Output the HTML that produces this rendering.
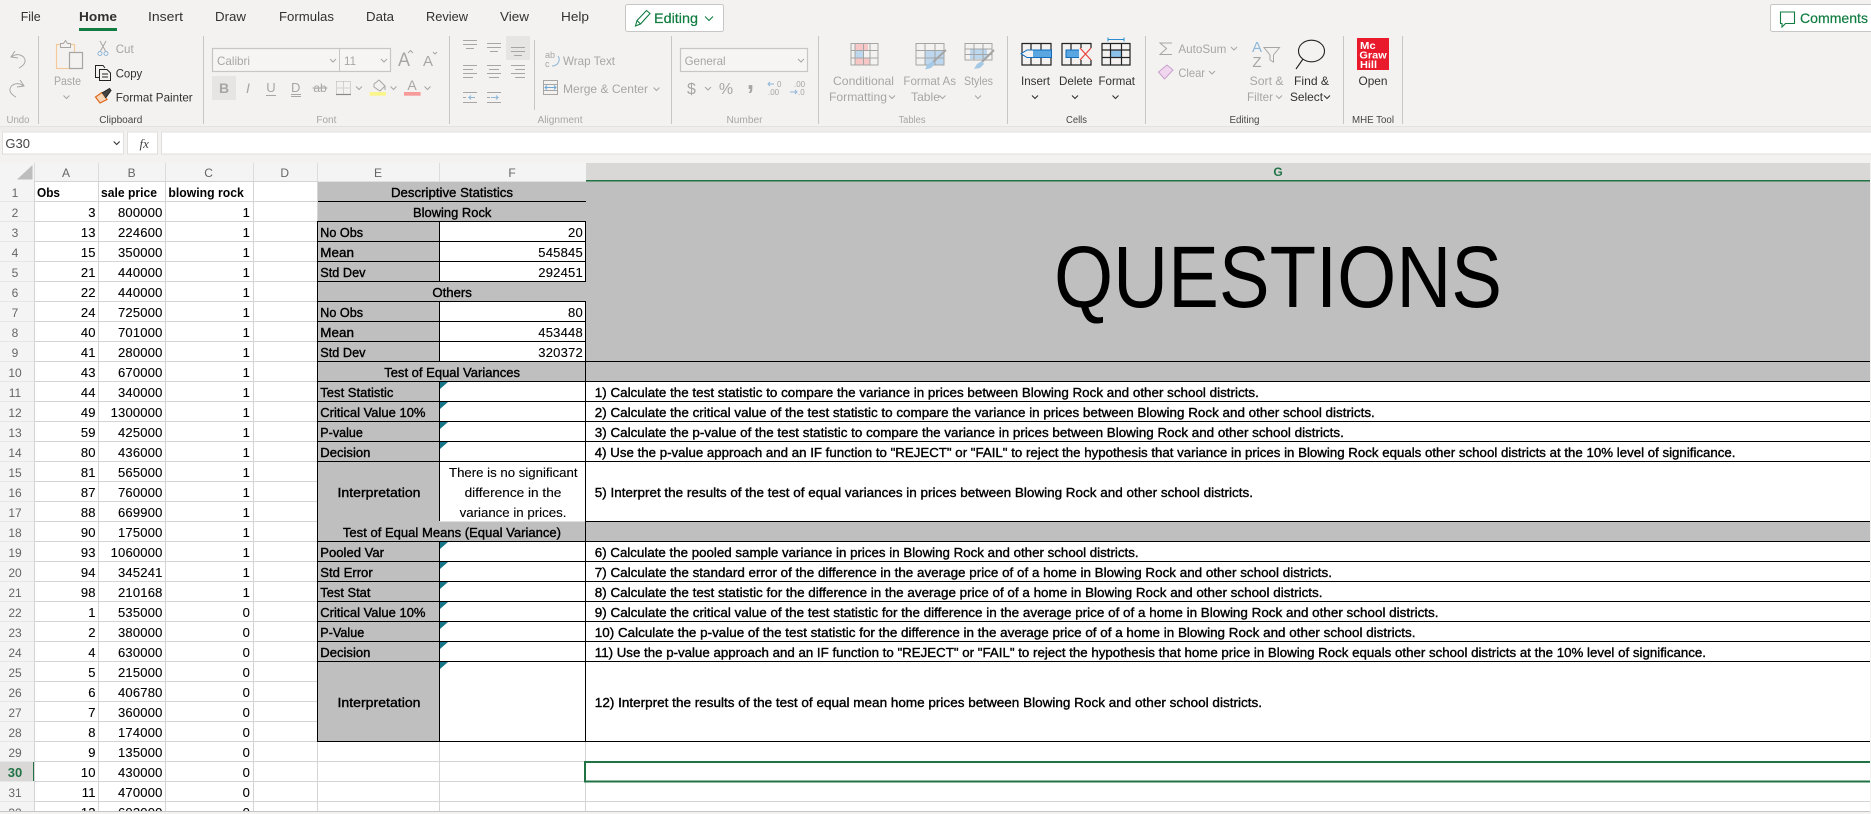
<!DOCTYPE html>
<html><head><meta charset="utf-8"><title>Excel</title>
<style>
html,body{margin:0;padding:0;background:#f3f2f1;overflow:hidden}
svg{display:block}
text{font-family:"Liberation Sans",sans-serif;white-space:pre}
.s{font-size:13px;fill:#000}
.b{font-weight:bold}
.m{stroke:#000;stroke-width:.38}
.p{stroke:#000;stroke-width:.12}
.n{letter-spacing:.2px;text-anchor:end;stroke:#000;stroke-width:.12}
.h{font-size:12px;fill:#666;text-anchor:middle}
.t{font-size:13.3px;fill:#323130}
.r{font-size:12px;fill:#323130}
.d{font-size:12px;fill:#a8a6a4}
.g{font-size:10px;fill:#a8a6a4;text-anchor:middle}
.gd{font-size:10px;fill:#484644;text-anchor:middle}
.ic{fill:none;stroke:#a8a6a4;stroke-width:1}
.ik{fill:none;stroke:#222;stroke-width:1.2}
</style></head><body>
<svg xmlns="http://www.w3.org/2000/svg" width="1871" height="814" viewBox="0 0 1871 814">
<defs>
<path id="c" d="M-3 -1.5L0 1.5L3 -1.5" fill="none" stroke="#a8a6a4" stroke-width="1"/>
<path id="k" d="M-3 -1.5L0 1.5L3 -1.5" fill="none" stroke="#323130" stroke-width="1.1"/>
</defs>
<rect width="1871" height="814" fill="#f3f2f1"/>

<!-- Tabs -->
<text class="t" x="20.7" y="21" textLength="20" lengthAdjust="spacingAndGlyphs">File</text>
<text class="t b" x="79" y="21" textLength="38" lengthAdjust="spacingAndGlyphs">Home</text>
<rect x="79" y="28" width="38" height="3" fill="#107c41"/>
<text class="t" x="148" y="21" textLength="35" lengthAdjust="spacingAndGlyphs">Insert</text>
<text class="t" x="215" y="21" textLength="31" lengthAdjust="spacingAndGlyphs">Draw</text>
<text class="t" x="279" y="21" textLength="55" lengthAdjust="spacingAndGlyphs">Formulas</text>
<text class="t" x="366" y="21" textLength="28" lengthAdjust="spacingAndGlyphs">Data</text>
<text class="t" x="426" y="21" textLength="42" lengthAdjust="spacingAndGlyphs">Review</text>
<text class="t" x="500" y="21" textLength="29" lengthAdjust="spacingAndGlyphs">View</text>
<text class="t" x="561" y="21" textLength="28" lengthAdjust="spacingAndGlyphs">Help</text>

<rect x="625.5" y="4.5" width="98" height="27" rx="2" fill="#fff" stroke="#c8c6c4"/>
<path d="M635.5 26L637 20.5L646.5 10.5L650 13.5L640.5 24ZM637 20.5L640.5 24" fill="none" stroke="#107c41" stroke-width="1.1"/>
<text x="654" y="23" font-size="14" fill="#107c41" stroke="#107c41" stroke-width=".2" textLength="44" lengthAdjust="spacingAndGlyphs">Editing</text>
<path d="M705 16.5L709 20.5L713 16.5" fill="none" stroke="#107c41" stroke-width="1.1"/>

<rect x="1770.5" y="4.5" width="105" height="27" rx="2" fill="#fff" stroke="#c8c6c4"/>
<path d="M1780.5 12H1794.5V23.5H1785.5L1782 27V23.5H1780.5Z" fill="none" stroke="#107c41" stroke-width="1.1"/>
<text x="1800" y="23" font-size="14" fill="#107c41" stroke="#107c41" stroke-width=".2" textLength="68" lengthAdjust="spacingAndGlyphs">Comments</text>

<!-- Group separators -->
<path d="M38.5 36V124M203.5 36V124M449.5 36V124M534.5 40V110M671.5 36V124M818.5 36V124M1007.5 36V124M1145.5 36V124M1343.5 36V124M1402.5 36V124" stroke="#c8c6c4" fill="none"/>

<!-- Undo / redo -->
<path class="ic" d="M15 51L11 57L18 58M11.5 57C18 52 26 56 25 62C24 65 21 67 19 68"/>
<path class="ic" d="M20 80L24 86L17 87M23.5 86C17 81 9 85 10 91C11 94 14 96 16 97"/>

<!-- Paste -->
<rect x="56.5" y="44.5" width="18" height="24" fill="none" stroke="#f6c99a" stroke-width="1.2"/>
<path d="M60.5 47.5V43.5H63.5L65.5 40.5L67.5 43.5H70.5V47.5Z" fill="#f3f2f1" stroke="#a8a6a4"/>
<rect x="69.5" y="52.5" width="13" height="16" fill="#f3f2f1" stroke="#a5a5a5" stroke-width="1.2"/>
<text class="d" x="54" y="85" textLength="27" lengthAdjust="spacingAndGlyphs">Paste</text>
<use href="#c" x="66.5" y="97"/>

<!-- Clipboard -->
<path d="M100 41L105.5 51M106 41L100.5 51" fill="none" stroke="#a8a6a4"/>
<circle cx="100" cy="53.5" r="2" fill="none" stroke="#8fb7d8"/><circle cx="106" cy="53.5" r="2" fill="none" stroke="#8fb7d8"/>
<text class="d" x="115.7" y="53" textLength="18" lengthAdjust="spacingAndGlyphs">Cut</text>
<path d="M99 77.5H95.5V65.5H103L105 68" fill="none" stroke="#222"/>
<path d="M99.5 69.5H107L110.5 73V80.5H99.5ZM102 74H108M102 77H108" fill="#f3f2f1" stroke="#222"/>
<text class="r" x="115.7" y="77.5" textLength="26.5" lengthAdjust="spacingAndGlyphs">Copy</text>
<path d="M95.5 97L102 92.5L107 99.5L100 103Z" fill="#f8d8b8" stroke="#e0691d" stroke-width="1.2"/>
<path d="M102 93L109.5 88.5L111 90.5L105.5 98" fill="#444" stroke="#222"/>
<text class="r" x="115.7" y="101.5" textLength="77" lengthAdjust="spacingAndGlyphs">Format Painter</text>

<text class="g" x="18" y="123" textLength="23" lengthAdjust="spacingAndGlyphs">Undo</text>
<text class="gd" x="120.8" y="123" textLength="43" lengthAdjust="spacingAndGlyphs">Clipboard</text>
<text class="g" x="326.4" y="123" textLength="20" lengthAdjust="spacingAndGlyphs">Font</text>
<text class="g" x="560" y="123" textLength="45" lengthAdjust="spacingAndGlyphs">Alignment</text>
<text class="g" x="744.5" y="123" textLength="36" lengthAdjust="spacingAndGlyphs">Number</text>
<text class="g" x="912" y="123" textLength="27" lengthAdjust="spacingAndGlyphs">Tables</text>
<text class="gd" x="1076.5" y="123" textLength="21" lengthAdjust="spacingAndGlyphs">Cells</text>
<text class="gd" x="1244.5" y="123" textLength="30" lengthAdjust="spacingAndGlyphs">Editing</text>
<text class="gd" x="1373" y="123" textLength="42" lengthAdjust="spacingAndGlyphs">MHE Tool</text>

<!-- Font -->
<rect x="212.5" y="48.5" width="178" height="23" fill="#f6f5f4" stroke="#c8c6c4" stroke-width="1.2"/>
<path d="M339.5 48.5V71.5" stroke="#c8c6c4"/>
<text class="d" x="217" y="65" textLength="33" lengthAdjust="spacingAndGlyphs">Calibri</text>
<text class="d" x="344" y="65" textLength="12" lengthAdjust="spacingAndGlyphs">11</text>
<use href="#c" x="333" y="60.5"/><use href="#c" x="384" y="60.5"/>
<text x="398" y="66" font-size="19" fill="#a8a6a4" textLength="12" lengthAdjust="spacingAndGlyphs">A</text>
<path class="ic" d="M408 53L410.5 50.5L413 53"/>
<text x="423" y="66" font-size="15" fill="#a8a6a4" textLength="10" lengthAdjust="spacingAndGlyphs">A</text>
<path class="ic" d="M433 52L435 54L437 52"/>
<rect x="212" y="76" width="24" height="24" fill="#e6e5e4"/>
<text x="224" y="93" font-size="14" font-weight="bold" fill="#a8a6a4" text-anchor="middle">B</text>
<text x="248" y="93" font-size="14" font-style="italic" fill="#a8a6a4" text-anchor="middle">I</text>
<text x="271" y="92" font-size="13" fill="#a8a6a4" text-anchor="middle">U</text>
<path d="M266 95.5H276" stroke="#a8a6a4"/>
<text x="295.7" y="92" font-size="13" fill="#a8a6a4" text-anchor="middle">D</text>
<path d="M291 94.5H301M291 96.5H301" stroke="#a8a6a4"/>
<text x="320" y="92" font-size="12" fill="#a8a6a4" text-anchor="middle">ab</text>
<path d="M312.5 88H327.5" stroke="#a8a6a4"/>
<path d="M336.5 81.5H350.5V94.5M336.5 81.5V94.5M343.5 81.5V94.5M336.5 88H350.5" fill="none" stroke="#b5b3b1" stroke-dasharray="1 1"/>
<path d="M336 94.5H351" stroke="#8a8886" stroke-width="1.2"/>
<use href="#c" x="359" y="88"/>
<path class="ic" d="M374 84L379 80L385 86L380 91L374 87ZM385 86V90"/>
<rect x="369.6" y="92" width="16.4" height="3.7" fill="#fbf68c"/>
<use href="#c" x="393.5" y="88"/>
<text x="412" y="90" font-size="14" fill="#a8a6a4" text-anchor="middle">A</text>
<rect x="404" y="92" width="16.6" height="3.7" fill="#f79a9a"/>
<use href="#c" x="427.5" y="88"/>

<!-- Alignment -->
<rect x="506" y="36" width="24" height="24" fill="#e6e5e4"/>
<path class="ic" d="M463 40.5H477M463 44.5H477M466 48.5H474M487 43.5H501M487 47.5H501M490 51.5H498M511 47.5H525M511 51.5H525M514 55.5H522"/>
<path class="ic" d="M463 65.5H477M463 69.5H473M463 73.5H477M463 77.5H473M487 65.5H501M489 69.5H499M487 73.5H501M489 77.5H499M511 65.5H525M515 69.5H525M511 73.5H525M515 77.5H525"/>
<path class="ic" d="M463 92.5H477M463 97.5H466M463 102.5H477M487 92.5H501M487 97.5H490M487 102.5H501"/>
<path d="M475 97.5H469L471 95.5M469 97.5L471 99.5M491 97.5H498L496 95.5M498 97.5L496 99.5" fill="none" stroke="#8fb7d8"/>
<text x="545" y="58" font-size="9" fill="#a8a6a4">ab</text>
<text x="545" y="67" font-size="9" fill="#a8a6a4">c</text>
<path d="M558 56C561 60 558 66 552 66" fill="none" stroke="#8fb7d8"/>
<text class="d" x="563" y="65" textLength="52" lengthAdjust="spacingAndGlyphs">Wrap Text</text>
<rect x="543.5" y="80.5" width="14" height="14" fill="none" stroke="#a8a6a4"/>
<path d="M543.5 84.5H557.5M543.5 90.5H557.5" stroke="#a8a6a4"/>
<path d="M545 87.5H556M547 85.5L545 87.5L547 89.5M554 85.5L556 87.5L554 89.5" fill="none" stroke="#6ea8d8"/>
<text class="d" x="563" y="93" textLength="85" lengthAdjust="spacingAndGlyphs">Merge &amp; Center</text>
<use href="#c" x="656.5" y="89"/>

<!-- Number -->
<rect x="680.5" y="48.5" width="127" height="23" fill="#f6f5f4" stroke="#c8c6c4" stroke-width="1.2"/>
<text class="d" x="684.6" y="65" textLength="41" lengthAdjust="spacingAndGlyphs">General</text>
<use href="#c" x="801" y="60.5"/>
<text x="691.5" y="94" font-size="16" fill="#a8a6a4" text-anchor="middle">$</text>
<use href="#c" x="708" y="88.5"/>
<text x="726" y="94" font-size="16" fill="#a8a6a4" text-anchor="middle">%</text>
<text x="750.5" y="89" font-size="26" font-weight="bold" fill="#a8a6a4" text-anchor="middle">,</text>
<text x="777" y="87" font-size="8" fill="#a8a6a4">0</text>
<path d="M774 84H768M770 82L768 84L770 86" fill="none" stroke="#8fb7d8"/>
<text x="768" y="95" font-size="8" fill="#a8a6a4">.00</text>
<text x="794" y="87" font-size="8" fill="#a8a6a4">.00</text>
<path d="M790 92H797M795 90L797 92L795 94" fill="none" stroke="#8fb7d8"/>
<text x="798" y="95" font-size="8" fill="#a8a6a4">.0</text>

<!-- Tables -->
<rect x="855" y="43" width="13" height="7.5" fill="#f7c6c6"/><rect x="855" y="50.5" width="8.5" height="7.5" fill="#bcd7ee"/><rect x="855" y="58" width="15" height="7" fill="#f7c6c6"/>
<path d="M851 43.5H878V65H851ZM851 50.5H878M851 58H878M855 43.5V65M863.5 43.5V65M870 43.5V65" fill="none" stroke="#a5a5a5"/>
<text class="d" x="833" y="85" textLength="61" lengthAdjust="spacingAndGlyphs">Conditional</text>
<text class="d" x="829" y="101" textLength="58" lengthAdjust="spacingAndGlyphs">Formatting</text><use href="#c" x="892" y="97"/>
<rect x="925" y="50" width="19" height="15" fill="#bcd7ee"/>
<path d="M916 43.5H944V65H916ZM916 50.5H944M916 58H944M925 43.5V65M935 43.5V65" fill="none" stroke="#a5a5a5"/>
<path d="M946 50L933 62" stroke="#a5a5a5" stroke-width="2"/><path d="M933 61L927 65L925 69.5L931 68L935 64Z" fill="#a5c8e4"/>
<text class="d" x="903.4" y="85" textLength="52.6" lengthAdjust="spacingAndGlyphs">Format As</text>
<text class="d" x="911" y="101" textLength="29" lengthAdjust="spacingAndGlyphs">Table</text><use href="#c" x="942.5" y="97"/>
<rect x="970" y="49" width="17" height="10" fill="#bcd7ee"/>
<path d="M965 43.5H992V60H965ZM965 49H992M965 54.5H992M974 43.5V60M983 43.5V60" fill="none" stroke="#a5a5a5"/>
<path d="M994 50L982 62" stroke="#a5a5a5" stroke-width="2"/><path d="M982 61L977 64L974 69L980 68L984 64Z" fill="#a5c8e4"/>
<text class="d" x="964" y="85" textLength="29" lengthAdjust="spacingAndGlyphs">Styles</text><use href="#c" x="978" y="97"/>

<!-- Cells -->
<path class="ik" d="M1022 43.5H1051V65H1022ZM1031 43.5V65M1041 43.5V65"/>
<rect x="1029" y="50" width="22.5" height="7.5" fill="#5aa6e0" stroke="#0f6cbd"/>
<path d="M1033 50L1027 50L1021 53.7L1027 57.5H1033" fill="#f3f2f1" stroke="#0f6cbd"/>
<text class="r" x="1021" y="85" textLength="29" lengthAdjust="spacingAndGlyphs">Insert</text><use href="#k" x="1035" y="97"/>
<path class="ik" d="M1062 43.5H1091V65H1062ZM1071 43.5V65M1081 43.5V65"/>
<rect x="1066" y="50" width="14" height="7.5" fill="#5aa6e0" stroke="#0f6cbd"/>
<rect x="1079" y="48" width="14" height="12" fill="#f3f2f1"/>
<path d="M1080 48L1091 60M1091 48L1080 60" stroke="#e8403a" stroke-width="1.2"/>
<text class="r" x="1059" y="85" textLength="33.6" lengthAdjust="spacingAndGlyphs">Delete</text><use href="#k" x="1075" y="97"/>
<rect x="1110" y="50" width="11.5" height="7.5" fill="#8cc2ea"/>
<path class="ik" d="M1102 43.5H1130V65H1102ZM1110.5 43.5V65M1121.5 43.5V65M1102 50H1130M1102 57.5H1130"/>
<path d="M1108 39.5H1124M1108 37.5V41.5M1124 37.5V41.5" stroke="#2b8ccf" fill="none"/>
<text class="r" x="1098.5" y="85" textLength="36.5" lengthAdjust="spacingAndGlyphs">Format</text><use href="#k" x="1115.5" y="97"/>

<!-- Editing -->
<path class="ic" d="M1172 43H1160L1166.5 48.5L1160 54.5H1172" stroke-width="1.1"/>
<text class="d" x="1178.4" y="53" textLength="48" lengthAdjust="spacingAndGlyphs">AutoSum</text><use href="#c" x="1234" y="48.5"/>
<path d="M1158.5 72L1167 65L1173 70L1164.5 79Z" fill="#f0d7ef" stroke="#c8a2cc"/>
<text class="d" x="1178.4" y="77" textLength="26.6" lengthAdjust="spacingAndGlyphs">Clear</text><use href="#c" x="1212" y="72.5"/>
<text x="1257" y="52" font-size="15" fill="#8fb7d8" text-anchor="middle">A</text>
<text x="1257" y="67" font-size="15" fill="#a8a6a4" text-anchor="middle">Z</text>
<path class="ic" d="M1264 47.5H1279.5L1273.5 55V62L1270 60V55Z"/>
<text class="d" x="1249.6" y="85" textLength="34" lengthAdjust="spacingAndGlyphs">Sort &amp;</text>
<text class="d" x="1247" y="101" textLength="26" lengthAdjust="spacingAndGlyphs">Filter</text><use href="#c" x="1279" y="97"/>
<ellipse cx="1311.5" cy="51" rx="13" ry="10.8" fill="none" stroke="#222" stroke-width="1.1"/>
<path d="M1303 59L1296 69" stroke="#222" stroke-width="1.1"/>
<text class="r" x="1294" y="85" textLength="35" lengthAdjust="spacingAndGlyphs">Find &amp;</text>
<text class="r" x="1290" y="101" textLength="33" lengthAdjust="spacingAndGlyphs">Select</text><use href="#k" x="1327" y="97"/>

<!-- MHE -->
<rect x="1357" y="38" width="32" height="32" fill="#e81a2b"/>
<g font-size="10.5" font-weight="bold" fill="#fff">
<text x="1360" y="49" textLength="15.7" lengthAdjust="spacingAndGlyphs">Mc</text>
<text x="1359.4" y="58.5" textLength="27.3" lengthAdjust="spacingAndGlyphs">Graw</text>
<text x="1360" y="68" textLength="17" lengthAdjust="spacingAndGlyphs">Hill</text>
</g>
<text class="r" x="1358.5" y="85" textLength="29" lengthAdjust="spacingAndGlyphs">Open</text>

<!-- Ribbon shadow + formula bar -->
<rect x="0" y="126" width="1871" height="1" fill="#e3e2e1"/>
<rect x="0" y="127" width="1871" height="4" fill="#eeedec"/>
<rect x="2.5" y="132" width="121" height="22" fill="#fff" stroke="#e1dfdd"/>
<text x="5.4" y="148" font-size="13" fill="#444" textLength="24.6" lengthAdjust="spacingAndGlyphs">G30</text>
<use href="#k" x="116.7" y="143"/>
<rect x="127.5" y="132" width="30" height="22" fill="#fff" stroke="#e1dfdd"/>
<text x="139.5" y="148" font-size="13" font-style="italic" fill="#444" style="font-family:'Liberation Serif',serif">fx</text>
<rect x="161.5" y="132" width="1712" height="22" fill="#fff" stroke="#e1dfdd"/>

<!-- Sheet background -->
<rect x="0" y="163" width="1871" height="18" fill="#f4f4f4"/>
<rect x="0" y="181" width="34" height="633" fill="#f4f4f4"/>
<rect x="34" y="181" width="1837" height="633" fill="#fff"/>
<rect x="586" y="163" width="1284" height="17" fill="#d9d8d6"/>
<rect x="586" y="180" width="1284" height="2" fill="#217346"/>
<path d="M17 179.5L32.5 165V179.5Z" fill="#bdbdbd"/>
<path d="M34.5 163V181M98.5 163V181M165.5 163V181M253.5 163V181M317.5 163V181M439.5 163V181" stroke="#dcdcdc"/>
<rect x="0" y="761.5" width="33" height="20" fill="#d9d8d6"/>
<rect x="33" y="761" width="1.5" height="21" fill="#217346"/>

<!-- Gridlines -->
<path fill="none" stroke="#d4d4d4" d="M34.5 181V812M98.5 181V812M165.5 181V812M253.5 181V812M317.5 181V812M439.5 741V812M585.5 741V812
M34 181.5H318M34 201.5H318M34 221.5H318M34 241.5H318M34 261.5H318M34 281.5H318M34 301.5H318M34 321.5H318M34 341.5H318M34 361.5H318M34 381.5H318M34 401.5H318M34 421.5H318M34 441.5H318M34 461.5H318M34 481.5H318M34 501.5H318M34 521.5H318M34 541.5H318M34 561.5H318M34 581.5H318M34 601.5H318M34 621.5H318M34 641.5H318M34 661.5H318M34 681.5H318M34 701.5H318M34 721.5H318M34 741.5H318M34 761.5H1870M34 781.5H1870M34 801.5H1870"/>
<path fill="none" stroke="#e6e6e6" d="M0 201.5H34M0 221.5H34M0 241.5H34M0 261.5H34M0 281.5H34M0 301.5H34M0 321.5H34M0 341.5H34M0 361.5H34M0 381.5H34M0 401.5H34M0 421.5H34M0 441.5H34M0 461.5H34M0 481.5H34M0 501.5H34M0 521.5H34M0 541.5H34M0 561.5H34M0 581.5H34M0 601.5H34M0 621.5H34M0 641.5H34M0 661.5H34M0 681.5H34M0 701.5H34M0 721.5H34M0 741.5H34M0 761.5H34M0 781.5H34M0 801.5H34"/>

<!-- Gray fills -->
<rect x="318" y="181.5" width="1552" height="180" fill="#bfbfbf"/>
<rect x="440" y="221.5" width="145.5" height="60" fill="#fff"/>
<rect x="440" y="301.5" width="145.5" height="60" fill="#fff"/>
<rect x="318" y="361.5" width="1552" height="20" fill="#bfbfbf"/>
<rect x="318" y="381.5" width="121.5" height="140" fill="#bfbfbf"/>
<rect x="440" y="381.5" width="146" height="140" fill="#fff"/>
<rect x="586" y="381.5" width="1284" height="140" fill="#fff"/>
<rect x="318" y="521.5" width="1552" height="20" fill="#bfbfbf"/>
<rect x="318" y="541.5" width="121.5" height="200" fill="#bfbfbf"/>
<rect x="440" y="541.5" width="1430" height="200" fill="#fff"/>

<!-- Black borders -->
<path fill="none" stroke="#000" d="M318 201.5H586M318 221.5H586M318 241.5H586M318 261.5H586M318 281.5H586M318 301.5H586M318 321.5H586M318 341.5H586
M318 361.5H1870M318 381.5H1870M318 401.5H1870M318 421.5H1870M318 441.5H1870M318 461.5H1870M586 521.5H1870M318 541.5H1870M318 561.5H1870M318 581.5H1870M318 601.5H1870M318 621.5H1870M318 641.5H1870M318 661.5H1870M318 741.5H1870
M317.5 221V742M439.5 221V281M439.5 301V361M439.5 381V521M439.5 541V742M585.5 221V281M585.5 301V742"/>

<!-- Comment triangles -->
<path fill="#17768a" d="M440 382H448L440 389ZM440 402H448L440 409ZM440 422H448L440 429ZM440 442H448L440 449ZM440 542H448L440 549ZM440 562H448L440 569ZM440 582H448L440 589ZM440 602H448L440 609ZM440 622H448L440 629ZM440 642H448L440 649ZM440 662H448L440 669Z"/>

<!-- Column letters -->
<g>
<text class="h" x="66" y="177">A</text><text class="h" x="131.6" y="177">B</text><text class="h" x="208.6" y="177">C</text><text class="h" x="284.7" y="177">D</text><text class="h" x="378" y="177">E</text><text class="h" x="512" y="177">F</text>
<text x="1278" y="176" font-size="12" font-weight="bold" fill="#217346" text-anchor="middle">G</text>
</g>

<!-- Row numbers -->
<g>
<text class="h" x="15" y="197">1</text><text class="h" x="15" y="217">2</text><text class="h" x="15" y="237">3</text><text class="h" x="15" y="257">4</text><text class="h" x="15" y="277">5</text><text class="h" x="15" y="297">6</text><text class="h" x="15" y="317">7</text><text class="h" x="15" y="337">8</text><text class="h" x="15" y="357">9</text><text class="h" x="15" y="377">10</text><text class="h" x="15" y="397">11</text><text class="h" x="15" y="417">12</text><text class="h" x="15" y="437">13</text><text class="h" x="15" y="457">14</text><text class="h" x="15" y="477">15</text><text class="h" x="15" y="497">16</text><text class="h" x="15" y="517">17</text><text class="h" x="15" y="537">18</text><text class="h" x="15" y="557">19</text><text class="h" x="15" y="577">20</text><text class="h" x="15" y="597">21</text><text class="h" x="15" y="617">22</text><text class="h" x="15" y="637">23</text><text class="h" x="15" y="657">24</text><text class="h" x="15" y="677">25</text><text class="h" x="15" y="697">26</text><text class="h" x="15" y="717">27</text><text class="h" x="15" y="737">28</text><text class="h" x="15" y="757">29</text>
<text x="15" y="777" font-size="13" font-weight="bold" fill="#217346" text-anchor="middle">30</text>
<text class="h" x="15" y="797">31</text><text class="h" x="15" y="817">32</text>
</g>

<!-- Column A-C data -->
<text class="s b" x="37" y="197" textLength="23" lengthAdjust="spacingAndGlyphs">Obs</text>
<text class="s b" x="101" y="197" textLength="56" lengthAdjust="spacingAndGlyphs">sale price</text>
<text class="s b" x="168.4" y="197" textLength="75.4" lengthAdjust="spacingAndGlyphs">blowing rock</text>
<g class="s">
<text class="s n" x="95.7" y="217">3</text><text class="s n" x="162.6" y="217">800000</text><text class="s n" x="250" y="217">1</text>
<text class="s n" x="95.7" y="237">13</text><text class="s n" x="162.6" y="237">224600</text><text class="s n" x="250" y="237">1</text>
<text class="s n" x="95.7" y="257">15</text><text class="s n" x="162.6" y="257">350000</text><text class="s n" x="250" y="257">1</text>
<text class="s n" x="95.7" y="277">21</text><text class="s n" x="162.6" y="277">440000</text><text class="s n" x="250" y="277">1</text>
<text class="s n" x="95.7" y="297">22</text><text class="s n" x="162.6" y="297">440000</text><text class="s n" x="250" y="297">1</text>
<text class="s n" x="95.7" y="317">24</text><text class="s n" x="162.6" y="317">725000</text><text class="s n" x="250" y="317">1</text>
<text class="s n" x="95.7" y="337">40</text><text class="s n" x="162.6" y="337">701000</text><text class="s n" x="250" y="337">1</text>
<text class="s n" x="95.7" y="357">41</text><text class="s n" x="162.6" y="357">280000</text><text class="s n" x="250" y="357">1</text>
<text class="s n" x="95.7" y="377">43</text><text class="s n" x="162.6" y="377">670000</text><text class="s n" x="250" y="377">1</text>
<text class="s n" x="95.7" y="397">44</text><text class="s n" x="162.6" y="397">340000</text><text class="s n" x="250" y="397">1</text>
<text class="s n" x="95.7" y="417">49</text><text class="s n" x="162.6" y="417">1300000</text><text class="s n" x="250" y="417">1</text>
<text class="s n" x="95.7" y="437">59</text><text class="s n" x="162.6" y="437">425000</text><text class="s n" x="250" y="437">1</text>
<text class="s n" x="95.7" y="457">80</text><text class="s n" x="162.6" y="457">436000</text><text class="s n" x="250" y="457">1</text>
<text class="s n" x="95.7" y="477">81</text><text class="s n" x="162.6" y="477">565000</text><text class="s n" x="250" y="477">1</text>
<text class="s n" x="95.7" y="497">87</text><text class="s n" x="162.6" y="497">760000</text><text class="s n" x="250" y="497">1</text>
<text class="s n" x="95.7" y="517">88</text><text class="s n" x="162.6" y="517">669900</text><text class="s n" x="250" y="517">1</text>
<text class="s n" x="95.7" y="537">90</text><text class="s n" x="162.6" y="537">175000</text><text class="s n" x="250" y="537">1</text>
<text class="s n" x="95.7" y="557">93</text><text class="s n" x="162.6" y="557">1060000</text><text class="s n" x="250" y="557">1</text>
<text class="s n" x="95.7" y="577">94</text><text class="s n" x="162.6" y="577">345241</text><text class="s n" x="250" y="577">1</text>
<text class="s n" x="95.7" y="597">98</text><text class="s n" x="162.6" y="597">210168</text><text class="s n" x="250" y="597">1</text>
<text class="s n" x="95.7" y="617">1</text><text class="s n" x="162.6" y="617">535000</text><text class="s n" x="250" y="617">0</text>
<text class="s n" x="95.7" y="637">2</text><text class="s n" x="162.6" y="637">380000</text><text class="s n" x="250" y="637">0</text>
<text class="s n" x="95.7" y="657">4</text><text class="s n" x="162.6" y="657">630000</text><text class="s n" x="250" y="657">0</text>
<text class="s n" x="95.7" y="677">5</text><text class="s n" x="162.6" y="677">215000</text><text class="s n" x="250" y="677">0</text>
<text class="s n" x="95.7" y="697">6</text><text class="s n" x="162.6" y="697">406780</text><text class="s n" x="250" y="697">0</text>
<text class="s n" x="95.7" y="717">7</text><text class="s n" x="162.6" y="717">360000</text><text class="s n" x="250" y="717">0</text>
<text class="s n" x="95.7" y="737">8</text><text class="s n" x="162.6" y="737">174000</text><text class="s n" x="250" y="737">0</text>
<text class="s n" x="95.7" y="757">9</text><text class="s n" x="162.6" y="757">135000</text><text class="s n" x="250" y="757">0</text>
<text class="s n" x="95.7" y="777">10</text><text class="s n" x="162.6" y="777">430000</text><text class="s n" x="250" y="777">0</text>
<text class="s n" x="95.7" y="797">11</text><text class="s n" x="162.6" y="797">470000</text><text class="s n" x="250" y="797">0</text>
<text class="s n" x="95.7" y="817">12</text><text class="s n" x="162.6" y="817">602000</text><text class="s n" x="250" y="817">0</text>
</g>

<!-- E-F table -->
<text class="s m" x="391" y="197" textLength="122" lengthAdjust="spacingAndGlyphs">Descriptive Statistics</text>
<text class="s m" x="413" y="217" textLength="78.4" lengthAdjust="spacingAndGlyphs">Blowing Rock</text>
<text class="s m" x="320.3" y="237" textLength="42.7" lengthAdjust="spacingAndGlyphs">No Obs</text><text class="s n" x="582.9" y="237">20</text>
<text class="s m" x="320.3" y="257" textLength="33.7" lengthAdjust="spacingAndGlyphs">Mean</text><text class="s n" x="582.9" y="257">545845</text>
<text class="s m" x="320.3" y="277" textLength="45.2" lengthAdjust="spacingAndGlyphs">Std Dev</text><text class="s n" x="582.9" y="277">292451</text>
<text class="s m" x="432.4" y="297" textLength="39.5" lengthAdjust="spacingAndGlyphs">Others</text>
<text class="s m" x="320.3" y="317" textLength="42.7" lengthAdjust="spacingAndGlyphs">No Obs</text><text class="s n" x="582.9" y="317">80</text>
<text class="s m" x="320.3" y="337" textLength="33.7" lengthAdjust="spacingAndGlyphs">Mean</text><text class="s n" x="582.9" y="337">453448</text>
<text class="s m" x="320.3" y="357" textLength="45.2" lengthAdjust="spacingAndGlyphs">Std Dev</text><text class="s n" x="582.9" y="357">320372</text>
<text class="s m" x="384.2" y="377" textLength="135.8" lengthAdjust="spacingAndGlyphs">Test of Equal Variances</text>
<text class="s m" x="320.3" y="397" textLength="73.1" lengthAdjust="spacingAndGlyphs">Test Statistic</text>
<text class="s m" x="320.3" y="417" textLength="105.2" lengthAdjust="spacingAndGlyphs">Critical Value 10%</text>
<text class="s m" x="320.3" y="437" textLength="42.5" lengthAdjust="spacingAndGlyphs">P-value</text>
<text class="s m" x="320.3" y="457" textLength="50.1" lengthAdjust="spacingAndGlyphs">Decision</text>
<text class="s m" x="337.5" y="497" textLength="83" lengthAdjust="spacingAndGlyphs">Interpretation</text>
<text class="s p" x="449" y="477" textLength="128.5" lengthAdjust="spacingAndGlyphs">There is no significant</text>
<text class="s p" x="464.6" y="497" textLength="96.8" lengthAdjust="spacingAndGlyphs">difference in the</text>
<text class="s p" x="459.6" y="517" textLength="106.8" lengthAdjust="spacingAndGlyphs">variance in prices.</text>
<text class="s m" x="342.9" y="537" textLength="218.1" lengthAdjust="spacingAndGlyphs">Test of Equal Means (Equal Variance)</text>
<text class="s m" x="320.3" y="557" textLength="63.7" lengthAdjust="spacingAndGlyphs">Pooled Var</text>
<text class="s m" x="320.3" y="577" textLength="52.4" lengthAdjust="spacingAndGlyphs">Std Error</text>
<text class="s m" x="320.3" y="597" textLength="50.1" lengthAdjust="spacingAndGlyphs">Test Stat</text>
<text class="s m" x="320.3" y="617" textLength="105.2" lengthAdjust="spacingAndGlyphs">Critical Value 10%</text>
<text class="s m" x="320.3" y="637" textLength="44" lengthAdjust="spacingAndGlyphs">P-Value</text>
<text class="s m" x="320.3" y="657" textLength="50.1" lengthAdjust="spacingAndGlyphs">Decision</text>
<text class="s m" x="337.5" y="707" textLength="83" lengthAdjust="spacingAndGlyphs">Interpretation</text>

<!-- QUESTIONS -->
<text x="1054" y="307" font-size="87" fill="#000" textLength="448" lengthAdjust="spacingAndGlyphs">QUESTIONS</text>

<!-- Questions -->
<text class="s m" x="594.8" y="397" textLength="664" lengthAdjust="spacingAndGlyphs">1) Calculate the test statistic to compare the variance in prices between Blowing Rock and other school districts.</text>
<text class="s m" x="594.8" y="417" textLength="780" lengthAdjust="spacingAndGlyphs">2) Calculate the critical value of the test statistic to compare the variance in prices between Blowing Rock and other school districts.</text>
<text class="s m" x="594.8" y="437" textLength="749" lengthAdjust="spacingAndGlyphs">3) Calculate the p-value of the test statistic to compare the variance in prices between Blowing Rock and other school districts.</text>
<text class="s m" x="594.8" y="457" textLength="1140.7" lengthAdjust="spacingAndGlyphs">4) Use the p-value approach and an IF function to "REJECT" or "FAIL" to reject the hypothesis that variance in prices in Blowing Rock equals other school districts at the 10% level of significance.</text>
<text class="s m" x="594.8" y="497" textLength="658.2" lengthAdjust="spacingAndGlyphs">5) Interpret the results of the test of equal variances in prices between Blowing Rock and other school districts.</text>
<text class="s m" x="594.8" y="557" textLength="543.8" lengthAdjust="spacingAndGlyphs">6) Calculate the pooled sample variance in prices in Blowing Rock and other school districts.</text>
<text class="s m" x="594.8" y="577" textLength="737.2" lengthAdjust="spacingAndGlyphs">7) Calculate the standard error of the difference in the average price of of a home in Blowing Rock and other school districts.</text>
<text class="s m" x="594.8" y="597" textLength="727.7" lengthAdjust="spacingAndGlyphs">8) Calculate the test statistic for the difference in the average price of of a home in Blowing Rock and other school districts.</text>
<text class="s m" x="594.8" y="617" textLength="843.7" lengthAdjust="spacingAndGlyphs">9) Calculate the critical value of the test statistic for the difference in the average price of of a home in Blowing Rock and other school districts.</text>
<text class="s m" x="594.8" y="637" textLength="820.7" lengthAdjust="spacingAndGlyphs">10) Calculate the p-value of the test statistic for the difference in the average price of of a home in Blowing Rock and other school districts.</text>
<text class="s m" x="594.8" y="657" textLength="1111.2" lengthAdjust="spacingAndGlyphs">11) Use the p-value approach and an IF function to "REJECT" or "FAIL" to reject the hypothesis that home price in Blowing Rock equals other school districts at the 10% level of significance.</text>
<text class="s m" x="594.8" y="707" textLength="667.2" lengthAdjust="spacingAndGlyphs">12) Interpret the results of the test of equal mean home prices between Blowing Rock and other school districts.</text>

<!-- Selected cell -->
<rect x="585" y="762" width="1295" height="19.5" fill="#fff" stroke="#217346" stroke-width="2"/>

<!-- Bottom bar -->
<rect x="0" y="812" width="1871" height="2" fill="#f3f2f1"/>
<path d="M0 811.5H1871" stroke="#c8c6c4"/>
<rect x="1870" y="163" width="1" height="651" fill="#f3f2f1"/>
</svg>
</body></html>
